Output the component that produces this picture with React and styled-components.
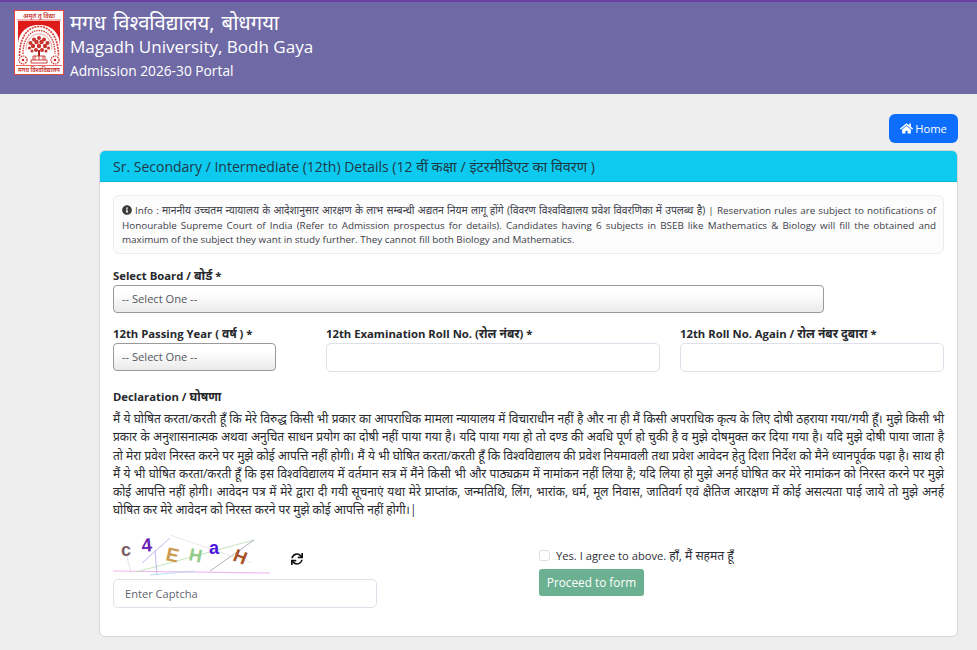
import React from 'react'
import styled, { createGlobalStyle } from 'styled-components'
import { FaHome, FaInfoCircle, FaSync } from 'react-icons/fa'

const GlobalStyle = createGlobalStyle`
  html, body {
    margin: 0;
    padding: 0;
    background: #eeeeee;
    font-family: "Open Sans", "Noto Sans", sans-serif;
    color: #212529;
  }
  * { box-sizing: border-box; }
`

const Page = styled.div`
  width: 977px;
  height: 650px;
  overflow: hidden;
`

const Header = styled.header`
  height: 94px;
  background: #6f6aa6;
  border-top: 2px solid #6c3fa3;
  padding: 8px 14px 0;
  display: flex;
  gap: 6px;
  align-items: flex-start;
`

const Logo = styled.svg`
  width: 50px;
  height: 65px;
  flex: none;
`

const Titles = styled.div`
  color: #fff;
  display: flex;
  flex-direction: column;
  margin-top: -1px;
`

const HindiTitle = styled.div`
  font-size: 20.2px;
  line-height: 26px;
  font-weight: 400;
  word-spacing: 2px;
`

const EnglishTitle = styled.div`
  font-size: 17.05px;
  line-height: 24px;
  font-weight: 500;
`

const PortalTitle = styled.div`
  font-size: 13.75px;
  line-height: 20px;
  font-weight: 500;
  margin-top: 2px;
`

const Main = styled.main`
  padding: 20px 19px 0 99px;
`

const TopBar = styled.div`
  display: flex;
  justify-content: flex-end;
  margin-bottom: 7px;
`

const HomeButton = styled.a`
  width: 69px;
  height: 29px;
  background: #0d6efd;
  color: #fff;
  border-radius: 6px;
  font-size: 11.2px;
  display: flex;
  align-items: center;
  justify-content: center;
  gap: 2px;
`

const Card = styled.section`
  background: #fff;
  border: 1px solid #d6d6d6;
  border-radius: 6px;
  height: 487px;
  overflow: hidden;
`

const CardHeader = styled.div`
  height: 31px;
  background: #0dcaf0;
  border-bottom: 1px solid #0bb5d8;
  padding: 0 13px;
  display: flex;
  align-items: center;
  font-size: 14px;
  color: #1f3a47;
  white-space: pre;
`

const CardBody = styled.div`
  padding: 13px 13px 0;
`

const Hi = styled.span`
  font-size: ${p => p.$scale || 1.06}em;
`

// one printed line, stretched edge to edge except the closing one
const TextLine = styled.div`
  text-align: ${p => (p.$last ? 'left' : 'justify')};
  text-align-last: ${p => (p.$last ? 'left' : 'justify')};
`

const InfoBox = styled.div`
  height: 59px;
  background: #fcfcfd;
  border: 1px solid #ececf0;
  border-radius: 6px;
  padding: 7px 7px 0 8px;
  font-size: 9.85px;
  line-height: 14.6px;
  color: #3c4048;

  svg {
    font-size: 10px;
    vertical-align: -1px;
    margin-right: 3px;
    color: #3a3a3a;
  }
`

const Label = styled.label`
  display: block;
  font-size: 11.3px;
  line-height: 14px;
  font-weight: 700;
  color: #26282c;
`

const NativeSelect = styled.select`
  display: block;
  width: ${p => p.$width};
  height: 28px;
  margin-top: 2px;
  padding: 0 0 2px 8px;
  appearance: none;
  border: 1px solid #9a9a9a;
  border-radius: 4px;
  background: linear-gradient(#ffffff 28%, #eaeaea 100%);
  font-family: inherit;
  font-size: 11.1px;
  color: #55585c;
`

const BoardField = styled.div`
  margin-top: 15px;
`

const FieldRow = styled.div`
  display: flex;
  margin-top: 14px;
`

const Field = styled.div`
  flex: none;
  width: ${p => p.$width};
  margin-right: ${p => p.$gap || '0'};
`

const TextInput = styled.input`
  display: block;
  width: 100%;
  height: 29px;
  margin-top: 2px;
  border: 1px solid #dfe1ea;
  border-radius: 5px;
  background: #fff;
  padding: 0 11px;
  font-family: inherit;
  font-size: 11.1px;
  color: #555;

  &::placeholder { color: #5f6670; opacity: 1; }
`

const SectionHeading = styled.div`
  margin-top: 18px;
  font-size: 11.3px;
  line-height: 14px;
  font-weight: 700;
  color: #26282c;
`

const Declaration = styled.div`
  margin: 6px 0 0;
  font-size: 11.95px;
  line-height: 18.3px;
  color: #2a2c30;
`

const BottomRow = styled.div`
  display: flex;
  margin-top: 13px;
`

const CaptchaCol = styled.div`
  width: 264px;
`

const CaptchaLine = styled.div`
  display: flex;
  align-items: center;
  gap: 18px;
  height: 44px;
`

const CaptchaImage = styled.svg`
  width: 160px;
  height: 44px;
  flex: none;
`

const RefreshIcon = styled(FaSync)`
  font-size: 12px;
  color: #111;
  margin-top: 8px;
`

const CaptchaInput = styled(TextInput)`
  margin-top: 2px;
`

const AgreeCol = styled.div`
  margin-left: 162px;
  padding-top: 14px;
`

const AgreeLine = styled.label`
  display: flex;
  align-items: center;
  gap: 6px;
  height: 18px;
  font-size: 11.2px;
  color: #2f2f38;
`

const Check = styled.input`
  appearance: none;
  width: 11px;
  height: 11px;
  margin: 0;
  border: 1px solid #dcdde6;
  border-radius: 3px;
  background: #fff;
`

const ProceedButton = styled.button`
  display: block;
  width: 105px;
  height: 27px;
  margin-top: 4px;
  border: 0;
  border-radius: 3px;
  background: #6bb090;
  color: #fff;
  font-family: inherit;
  font-size: 11.8px;
`

const declarationLines = [
  'मैं ये घोषित करता/करती हूँ कि मेरे विरुद्ध किसी भी प्रकार का आपराधिक मामला न्यायालय में विचाराधीन नहीं है और ना ही मैं किसी अपराधिक कृत्य के लिए दोषी ठहराया गया/गयी हूँ। मुझे किसी भी',
  'प्रकार के अनुशासनात्मक अथवा अनुचित साधन प्रयोग का दोषी नहीं पाया गया है। यदि पाया गया हो तो दण्ड की अवधि पूर्ण हो चुकी है व मुझे दोषमुक्त कर दिया गया है। यदि मुझे दोषी पाया जाता है',
  'तो मेरा प्रवेश निरस्त करने पर मुझे कोई आपत्ति नहीं होगी। मैं ये भी घोषित करता/करती हूँ कि विश्वविद्यालय की प्रवेश नियमावली तथा प्रवेश आवेदन हेतु दिशा निर्देश को मैने ध्यानपूर्वक पढ़ा है। साथ ही',
  'मैं ये भी घोषित करता/करती हूँ कि इस विश्वविद्यालय में वर्तमान सत्र में मैंने किसी भी और पाठ्यक्रम में नामांकन नहीं लिया है; यदि लिया हो मुझे अनर्ह घोषित कर मेरे नामांकन को निरस्त करने पर मुझे',
  'कोई आपत्ति नहीं होगी। आवेदन पत्र में मेरे द्वारा दी गयी सूचनाएं यथा मेरे प्राप्तांक, जन्मतिथि, लिंग, भारांक, धर्म, मूल निवास, जातिवर्ग एवं क्षैतिज आरक्षण में कोई असत्यता पाई जाये तो मुझे अनर्ह',
  'घोषित कर मेरे आवेदन को निरस्त करने पर मुझे कोई आपत्ति नहीं होगी।|'
]

const treeDots = [
  [25, 28, 2], [20, 29.5, 2], [30, 29.5, 2], [16.5, 33, 2], [33.5, 33, 2],
  [22.5, 32, 2.2], [27.5, 32, 2.2], [19, 36, 2.2], [25, 36, 2.2], [31, 36, 2.2],
  [15.5, 38, 1.6], [34.5, 38, 1.6], [22, 40, 2], [28, 40, 2], [18, 41, 1.5], [32, 41, 1.5]
]

const UniversityLogo = () => (
  <Logo viewBox="0 0 50 65">
    <rect x="0.5" y="0.5" width="49" height="64" fill="#fff" stroke="#e5483f" strokeWidth="1" />
    <text x="25" y="7.6" fontSize="6.4" fontWeight="600" fill="#c62c26" textAnchor="middle" fontFamily="Noto Sans">अमृतं तु विद्या</text>
    <path d="M3 10h44" stroke="#e5483f" strokeWidth="0.8" />
    <path d="M4 36V11h42v25C46 22 37 15 25 15S4 22 4 36z" fill="#df1a1a" />
    <g fill="none" stroke="#d8362f">
      <path d="M5.500 46C5.500 27 14 16.500 25 16.500S44.500 27 44.500 46" strokeWidth="1.6" strokeDasharray="2 0.900" />
      <path d="M9 44C9 29 16 20.500 25 20.500S41 29 41 44" strokeWidth="1.300" strokeDasharray="1.500 0.900" />
      <path d="M12 40C12 30 18 24 25 24s13 6 13 16" strokeWidth="0.800" stroke="#e88a84" />
    </g>
    <g fill="#c9332d">
      {treeDots.map(([cx, cy, r], i) => <circle key={i} cx={cx} cy={cy} r={r} />)}
    </g>
    <path d="M24 40h2v6h-2z" fill="#a81f1b" />
    <path d="M17 53h16v-3H17zM19 50v-4h12v4M21 50v-4M25 50v-4M29 50v-4" fill="#fff" stroke="#c62c26" strokeWidth="0.900" />
    <circle cx="9" cy="50" r="4" fill="#fff" stroke="#c62c26" strokeWidth="1.200" strokeDasharray="1.500 0.800" />
    <circle cx="41" cy="50" r="4" fill="#fff" stroke="#c62c26" strokeWidth="1.200" strokeDasharray="1.500 0.800" />
    <circle cx="9" cy="50" r="1.300" fill="#c62c26" />
    <circle cx="41" cy="50" r="1.300" fill="#c62c26" />
    <path d="M2 55.500h46" stroke="#e5483f" strokeWidth="0.8" />
    <text x="25" y="62" fontSize="5.800" fontWeight="600" fill="#c62c26" textAnchor="middle" fontFamily="Noto Sans">मगध विश्वविद्यालय</text>
  </Logo>
)

const CaptchaLetter = ({ x, y, size, color, rotate, children }) => (
  <text
    x={x}
    y={y}
    fontSize={size}
    fontWeight="700"
    fontFamily="Liberation Sans"
    fill={color}
    transform={`rotate(${rotate} ${x} ${y})`}
  >
    {children}
  </text>
)

const Captcha = () => (
  <CaptchaImage viewBox="0 0 160 44">
    <g fill="none" strokeWidth="0.8">
      <path d="M0 38L157 40" stroke="#eeb9ee" strokeWidth="1.200" />
      <path d="M23 39L141 7" stroke="#b7dcae" />
      <path d="M97 38L141 7" stroke="#9a9aac" />
      <path d="M29 30L57 5" stroke="#b5a6ee" />
      <path d="M42 17L44 42" stroke="#b5a6ee" />
      <path d="M37 42L82 38" stroke="#a9d5f2" />
      <path d="M57 2L139 30" stroke="#e3e3e3" />
      <path d="M13 20L18 40" stroke="#dddddd" />
    </g>
    <CaptchaLetter x="8" y="23" size="18" color="#7d6068" rotate="0">c</CaptchaLetter>
    <CaptchaLetter x="29" y="19" size="19" color="#6a1fb5" rotate="-5">4</CaptchaLetter>
    <CaptchaLetter x="52" y="27" size="19" color="#cd9a4e" rotate="12">E</CaptchaLetter>
    <CaptchaLetter x="75" y="27" size="18" color="#93cb8a" rotate="12">H</CaptchaLetter>
    <CaptchaLetter x="96" y="21" size="18" color="#4a12e0" rotate="0">a</CaptchaLetter>
    <CaptchaLetter x="119" y="27" size="18" color="#a84f25" rotate="22">H</CaptchaLetter>
  </CaptchaImage>
)

const App = () => {
  return (
    <Page>
      <GlobalStyle />
      <Header>
        <UniversityLogo />
        <Titles>
          <HindiTitle>मगध विश्वविद्यालय, बोधगया</HindiTitle>
          <EnglishTitle>Magadh University, Bodh Gaya</EnglishTitle>
          <PortalTitle>Admission 2026-30 Portal</PortalTitle>
        </Titles>
      </Header>
      <Main>
        <TopBar>
          <HomeButton><FaHome size={13} />Home</HomeButton>
        </TopBar>
        <Card>
          <CardHeader>Sr. Secondary / Intermediate (12th) Details (12 <Hi $scale={1.03}>वीं कक्षा / इंटरमीडिएट का विवरण</Hi> )</CardHeader>
          <CardBody>
            <InfoBox>
              <TextLine>
                <FaInfoCircle />
                Info : <Hi $scale={1.05}>माननीय उच्चतम न्यायालय के आदेशानुसार आरक्षण के लाभ सम्बन्धी अद्यतन नियम लागू होंगे (विवरण विश्वविद्यालय प्रवेश विवरणिका में उपलब्ध है)</Hi> | Reservation rules are subject to notifications of
              </TextLine>
              <TextLine>Honourable Supreme Court of India (Refer to Admission prospectus for details). Candidates having 6 subjects in BSEB like Mathematics &amp; Biology will fill the obtained and</TextLine>
              <TextLine $last>maximum of the subject they want in study further. They cannot fill both Biology and Mathematics.</TextLine>
            </InfoBox>
            <BoardField>
              <Label>Select Board / <Hi $scale={1.1}>बोर्ड</Hi> *</Label>
              <NativeSelect $width="711px"><option>-- Select One --</option></NativeSelect>
            </BoardField>
            <FieldRow>
              <Field $width="163px" $gap="50px">
                <Label>12th Passing Year ( <Hi>वर्ष</Hi> ) *</Label>
                <NativeSelect $width="163px"><option>-- Select One --</option></NativeSelect>
              </Field>
              <Field $width="334px" $gap="20px">
                <Label>12th Examination Roll No. (<Hi>रोल नंबर</Hi>) *</Label>
                <TextInput />
              </Field>
              <Field $width="264px">
                <Label>12th Roll No. Again / <Hi>रोल नंबर दुबारा</Hi> *</Label>
                <TextInput />
              </Field>
            </FieldRow>
            <SectionHeading>Declaration / <Hi>घोषणा</Hi></SectionHeading>
            <Declaration>
              {declarationLines.map((line, i) => (
                <TextLine key={i} $last={i === declarationLines.length - 1}>{line}</TextLine>
              ))}
            </Declaration>
            <BottomRow>
              <CaptchaCol>
                <CaptchaLine>
                  <Captcha />
                  <RefreshIcon />
                </CaptchaLine>
                <CaptchaInput placeholder="Enter Captcha" />
              </CaptchaCol>
              <AgreeCol>
                <AgreeLine><Check type="checkbox" /><span>Yes. I agree to above. <Hi $scale={1.08}>हाँ, मैं सहमत हूँ</Hi></span></AgreeLine>
                <ProceedButton>Proceed to form</ProceedButton>
              </AgreeCol>
            </BottomRow>
          </CardBody>
        </Card>
      </Main>
    </Page>
  )
}

export default App
